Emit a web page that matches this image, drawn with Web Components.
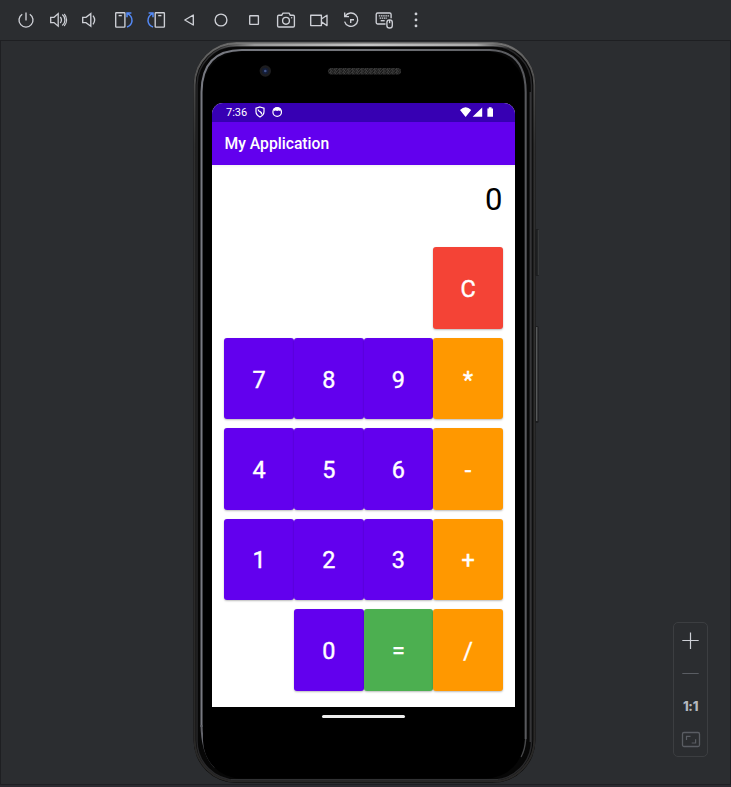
<!DOCTYPE html>
<html lang="en">
<head>
<meta charset="utf-8">
<title>Running Devices</title>
<style>
html,body{margin:0;height:100%;overflow:hidden;background:#2b2d30}
body{font-family:Roboto,"Liberation Sans",sans-serif}
</style>
</head>
<body>
<emulator-window></emulator-window>
<script>
function define(name, html) {
  const t = document.createElement('template');
  t.innerHTML = html;
  customElements.define(name, class extends HTMLElement {
    constructor() {
      super();
      this.attachShadow({mode: 'open'}).append(t.content.cloneNode(true));
    }
  });
}

define('tool-bar', `
<style>
:host{display:block;height:40px;box-sizing:border-box;background:#2b2d30;border-bottom:1px solid #1e1f22}
svg{display:block;fill:none;stroke:#ced0d6;stroke-width:1.35}
.b{stroke:#548af7}
.f{fill:#ced0d6;stroke:none}
</style>
<svg width="731" height="40" viewBox="0 0 731 40">
  <path d="M22.2 14.2A7 7 0 1 0 29.8 14.2M26 12.5V20.5"/>
  <path d="M50.7 17.3H54L58.2 13.6V26.2L54 22.6H50.7ZM60.3 17Q62.6 20 60.3 23M62.3 14.4A7.2 7.2 0 0 1 62.3 25.6" stroke-width="1.3"/><path d="M64.2 14A8.6 8.6 0 0 1 64.2 26" stroke-width="1.1"/>
  <path d="M82.7 17.3H86L90.8 13.6V26.2L86 22.6H82.7ZM93 15.6Q96.3 20 93 24.4"/>
  <rect x="115.7" y="12.7" width="9.2" height="14.4" rx=".6"/><path d="M118.6 15.6H121.8"/>
  <path class="b" d="M127 13.2Q132.3 16 132 21Q131.5 25.5 127 27M131.4 13H127V17.2" stroke-width="1.5"/>
  <rect x="155.2" y="12.7" width="9.2" height="14.4" rx=".6"/><path d="M158.2 15.6H161.4"/>
  <path class="b" d="M153 13.2Q147.7 16 148 21Q148.5 25.5 153 27M148.6 13H153V17.2" stroke-width="1.5"/>
  <path d="M193.3 15V25L184.8 20Z" stroke-linejoin="round"/>
  <circle cx="221" cy="20" r="5.9"/>
  <rect x="249.7" y="15.7" width="8.7" height="8.7" rx=".4"/>
  <path d="M278.8 15.2H281.7L283 13.1H289L290.3 15.2H293.2Q294.4 15.2 294.4 16.4V25.8Q294.4 27 293.2 27H278.8Q277.6 27 277.6 25.8V16.4Q277.6 15.2 278.8 15.2Z"/><circle cx="286" cy="20.8" r="3.4"/><circle class="f" cx="291.7" cy="17.7" r=".7"/>
  <path d="M310.7 15.2H321.4V25.6H310.7ZM321.4 19L327 15.2V25.6L321.4 21.8" stroke-linejoin="round"/>
  <path d="M345.3 16.2A6.7 6.7 0 1 1 344.6 21.6M344.7 12.4V16.6H349M350.7 23V19.7H354"/>
  <path d="M385.5 24H377.6Q376.2 24 376.2 22.6V14.4Q376.2 13 377.6 13H389.7Q391.1 13 391.1 14.4V18.2"/>
  <path d="M378.8 15.8H389M379.6 18.1H387" stroke-dasharray="1.5 .7"/><path d="M380.7 20.7H384.7"/>
  <rect x="386.9" y="19.8" width="5.4" height="8.2" rx="2.6"/><path d="M389.6 20V23.2"/>
  <circle class="f" cx="416" cy="13.9" r="1.4"/><circle class="f" cx="416" cy="19.9" r="1.4"/><circle class="f" cx="416" cy="25.9" r="1.4"/>
</svg>`);

/* Hardware body of the phone; the slot holds what the display shows. */
define('phone-frame', `
<style>
:host{display:grid;width:352px;height:744px}
svg{grid-area:1/1;display:block}
.in{grid-area:1/1;padding:63px 28px 76.6px 21px;display:grid}
</style>
<svg viewBox="191 40 352 744" width="352" height="744" fill="none">
  <defs>
    <linearGradient id="o" x1="0" y1="0" x2="0" y2="1"><stop offset="0" stop-color="#666"/><stop offset=".07" stop-color="#454545"/><stop offset=".14" stop-color="#303030"/><stop offset="1" stop-color="#292827"/></linearGradient>
    <linearGradient id="i" x1="0" y1="0" x2="1" y2="0"><stop offset="0" stop-color="#777981"/><stop offset=".5" stop-color="#73757a"/><stop offset="1" stop-color="#58595d"/></linearGradient>
    <linearGradient id="t" x1="0" y1="0" x2="1" y2="0"><stop offset="0" stop-color="#777" stop-opacity="0"/><stop offset=".16" stop-color="#999"/><stop offset=".5" stop-color="#c4c4c4"/><stop offset=".84" stop-color="#aaa"/><stop offset="1" stop-color="#777" stop-opacity="0"/></linearGradient>
    <pattern id="m" width="4.4" height="3" patternUnits="userSpaceOnUse"><rect width="5" height="3" fill="#151515"/><path d="M0 0L2.2 3L4.4 0M0 3L2.2 0" stroke="#555" stroke-width=".6"/></pattern>
  </defs>
  <rect x="535" y="229" width="4" height="47" rx="1.5" fill="#1d1e20"/><path d="M538.3 230V275" stroke="#3f4042"/>
  <rect x="535" y="326" width="3.6" height="97" rx="1.5" fill="#1d1e20"/><path d="M536.8 327V421" stroke="#707173"/>
  <rect x="193.5" y="42" width="342" height="741" rx="43" fill="#070707"/>
  <rect x="194.6" y="43" width="339.8" height="738.5" rx="42" stroke="url(#o)" stroke-width="2"/>
  <rect x="197" y="46" width="334.5" height="734" rx="39" stroke="#28282a" stroke-width="1.5"/>
  <path d="M202 66Q211 45 237 44.9H493Q520 45 529 66" stroke="url(#t)" stroke-width="2.6"/>
  <path d="M201.5 727V92Q202 50 242 50H490Q525.7 51 525.7 92V739" stroke="url(#i)" stroke-width="2"/>
  <path d="M201.5 725Q202 754 215 767" stroke="#62636a" stroke-width="2"/>
  <path d="M525.7 739Q525 750 521 757" stroke="#48494b" stroke-width="1.4"/>
  <path d="M530.2 92V742" stroke="#47484a"/>
  <path d="M231 779.7H498" stroke="#363738"/>
  <rect x="203" y="51.5" width="321" height="727" rx="38" fill="#000"/>
  <circle cx="265.3" cy="71" r="5.7" fill="#1d1d1f"/><circle cx="265.3" cy="71" r="3.2" fill="#141d36"/><circle cx="265.3" cy="71" r="1.3" fill="#42558c"/>
  <rect x="328" y="68" width="73" height="6.5" rx="3.2" fill="url(#m)"/>
  <rect x="322" y="715" width="83" height="3" rx="1.5" fill="#eee"/>
</svg>
<div class="in"><slot></slot></div>`);

define('status-bar', `
<style>
:host{display:flex;align-items:center;justify-content:space-between;height:18.6px;padding:0 20px 0 14px;background:#3700b3;color:#fff;font-size:11px}
div{display:flex;align-items:center}
span{line-height:18px;width:29px;padding-top:1px}
svg{display:block}
</style>
<div><span>7:36</span>
<svg width="30" height="12" viewBox="0 0 30 12" fill="none" stroke="#fff">
  <path d="M5 1L9 2.3V5.8Q9 9 5 11Q1 9 1 5.8V2.3ZM3.2 3.4Q3 5 5 5.6Q7 6.6 6.4 8.4" stroke-width="1.2"/>
  <circle cx="22.2" cy="6" r="4.3" stroke-width="1.2"/><path d="M18.4 2.8Q22 .4 26 2.8L25.5 5.5Q24 4 22.2 5Q20 4 18.8 5.5Z" fill="#fff" stroke="none"/>
</svg></div>
<svg width="35" height="12" viewBox="0 0 35 12" fill="#fff">
  <path d="M0 4Q5.6-1.6 11.2 4L5.6 11ZM12.6 10.8L22.2 1.4V10.8ZM27.4 2.4H28.8V1.2H31.6V2.4H33V10.8H27.4Z"/>
</svg>`);

define('app-bar', `
<style>
:host{display:flex;align-items:center;height:43.4px;box-sizing:border-box;padding:1px 0 0 12.5px;background:#6200ee;color:#fff;font-weight:500;font-size:15.7px;box-shadow:0 1px 3px #0001}
</style><span><slot></slot></span>`);

define('calc-key', `
<style>
:host{display:flex;align-items:center;justify-content:center;background:var(--key,#6200ee);color:#fff;font-weight:400;-webkit-text-stroke:.4px #fff;font-size:23.4px;border-radius:3px;box-shadow:0 1px 2px #0004}
:host([kind=op]){--key:#ff9800}
:host([kind=eq]){--key:#4caf50}
:host([kind=clear]){--key:#f44336}
span{line-height:28px;padding-top:2px}
</style><span><slot></slot></span>`);

define('calc-app', `
<style>
:host{display:flex;flex-direction:column;background:#fff;border-radius:11px 11px 0 0;overflow:hidden}
.out{height:82.45px;box-sizing:border-box;padding:17px 12.5px 0;text-align:right;font-size:31px;line-height:36px;color:#000}
.pad{display:grid;grid-template-columns:repeat(4,69.67px);grid-auto-rows:81.45px;row-gap:9px;padding-left:12.3px}
.c{grid-column:4}.z{grid-column:2}
</style>
<status-bar></status-bar><app-bar>My Application</app-bar>
<div class="out">0</div>
<div class="pad">
<calc-key class="c" kind="clear">C</calc-key>
<calc-key>7</calc-key><calc-key>8</calc-key><calc-key>9</calc-key><calc-key kind="op">*</calc-key>
<calc-key>4</calc-key><calc-key>5</calc-key><calc-key>6</calc-key><calc-key kind="op">-</calc-key>
<calc-key>1</calc-key><calc-key>2</calc-key><calc-key>3</calc-key><calc-key kind="op">+</calc-key>
<calc-key class="z">0</calc-key><calc-key kind="eq">=</calc-key><calc-key kind="op">/</calc-key>
</div>`);

define('zoom-panel', `
<style>
:host{display:flex;flex-direction:column;align-items:center;box-sizing:border-box;width:35px;height:135px;border:1px solid #3c3e41;border-radius:5px;background:#2b2d30}
svg{display:block;fill:none;stroke:#ced0d6}
span{font:800 13px/16px Inter,sans-serif;color:#b4b8bf;height:16px;letter-spacing:-.3px}
</style>
<svg width="33" height="75" viewBox="0 0 33 75"><path d="M16.5 9.5V26M8.3 17.5H24.7" stroke-width="1.2"/><path d="M8.3 50.5H24.7" stroke="#5a5d63"/></svg>
<span>1:1</span>
<svg width="33" height="42" viewBox="0 0 33 42" style="stroke:#5a5d63"><rect x="8.5" y="18.5" width="17" height="14" rx="1.5" stroke-width="1.3"/><path d="M12.5 26V22.3H16.5M17.7 29H21.6V25.2" stroke-width="1.2"/></svg>`);

define('emulator-window', `
<style>
:host{display:flex;flex-direction:column;width:731px;height:787px;box-sizing:border-box;position:relative;background:#2b2d30}
tool-bar{height:41px}
main{flex:1;padding-left:190px;border:1px solid #1e1f22;border-top:0;min-height:0}
phone-frame{margin-top:-1px}
footer{height:2px;background:#2b2a30}
zoom-panel{position:absolute;left:673px;top:622px}
</style>
<tool-bar></tool-bar>
<main><phone-frame><calc-app></calc-app></phone-frame></main>
<footer></footer>
<zoom-panel></zoom-panel>`);
</script>
</body>
</html>
